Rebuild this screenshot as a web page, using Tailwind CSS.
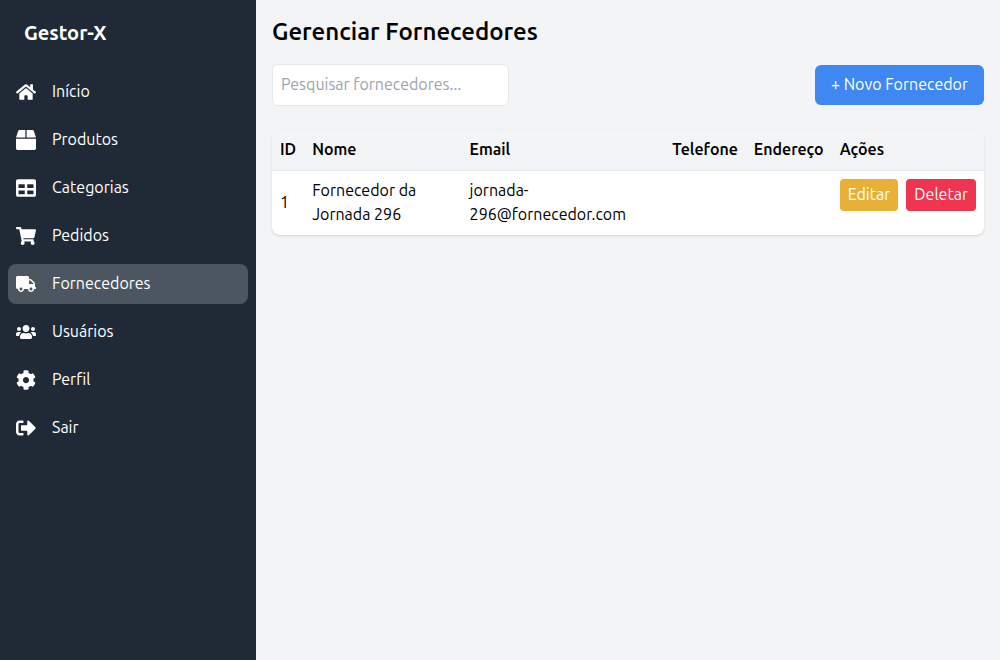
<!DOCTYPE html>
<html lang="pt-BR">
<head>
<meta charset="utf-8">
<meta name="viewport" content="width=device-width, initial-scale=1">
<title>Gestor-X</title>
<script src="https://cdn.jsdelivr.net/npm/@tailwindcss/browser@4"></script>
</head>
<body class="flex min-h-screen bg-[#f3f4f6] font-['Ubuntu_Sans','Ubuntu','Noto_Sans',sans-serif] text-black">
<aside class="w-64 shrink-0 bg-[#202a36] text-white">
  <div class="flex h-16 items-center px-6 pt-0.5 text-xl font-bold">Gestor-X</div>
  <nav class="mt-2 flex flex-col gap-2 px-2">
    <a href="#inicio" class="flex items-center gap-4 rounded-lg p-2"><svg class="size-5" fill="currentColor" viewBox="0 0 576 512" aria-hidden="true"><path d="M280.37 148.26L96 300.11V464a16 16 0 0 0 16 16l112.06-.29a16 16 0 0 0 15.92-16V368a16 16 0 0 1 16-16h64a16 16 0 0 1 16 16v95.64a16 16 0 0 0 16 16.05L464 480a16 16 0 0 0 16-16V300L295.67 148.26a12.19 12.19 0 0 0-15.3 0zM571.6 251.47L488 182.56V44.05a12 12 0 0 0-12-12h-56a12 12 0 0 0-12 12v72.61L318.47 43a48 48 0 0 0-61 0L4.34 251.47a12 12 0 0 0-1.6 16.9l25.5 31A12 12 0 0 0 45.15 301l235.22-193.74a12.19 12.19 0 0 1 15.3 0L530.9 301a12 12 0 0 0 16.9-1.6l25.5-31a12 12 0 0 0-1.7-16.93z"/></svg><span>Início</span></a>
    <a href="#produtos" class="flex items-center gap-4 rounded-lg p-2"><svg class="size-5" fill="currentColor" viewBox="0 0 512 512" aria-hidden="true"><path d="M509.5 184.6L458.9 32.8C452.4 13.2 434.1 0 413.4 0H272v192h238.7c-.4-2.5-.4-5-1.2-7.4zM240 0H98.6c-20.7 0-39 13.2-45.5 32.8L2.5 184.6c-.8 2.4-.8 4.9-1.2 7.4H240V0zM0 224v240c0 26.5 21.5 48 48 48h416c26.5 0 48-21.5 48-48V224H0z"/></svg><span>Produtos</span></a>
    <a href="#categorias" class="flex items-center gap-4 rounded-lg p-2"><svg class="size-5" fill="currentColor" viewBox="0 0 512 512" aria-hidden="true"><path d="M464 32H48C21.49 32 0 53.49 0 80v352c0 26.51 21.49 48 48 48h416c26.51 0 48-21.49 48-48V80c0-26.51-21.49-48-48-48zM224 416H64v-96h160v96zm0-160H64v-96h160v96zm224 160H288v-96h160v96zm0-160H288v-96h160v96z"/></svg><span>Categorias</span></a>
    <a href="#pedidos" class="flex items-center gap-4 rounded-lg p-2"><svg class="size-5" fill="currentColor" viewBox="0 0 576 512" aria-hidden="true"><path d="M528.12 301.319l47.273-208C578.806 78.301 567.391 64 551.99 64H159.208l-9.166-44.81C147.758 8.021 137.93 0 126.529 0H24C10.745 0 0 10.745 0 24v16c0 13.255 10.745 24 24 24h69.883l70.248 343.435C147.325 417.1 136 435.222 136 456c0 30.928 25.072 56 56 56s56-25.072 56-56c0-15.674-6.447-29.835-16.824-40h209.647C430.447 426.165 424 440.326 424 456c0 30.928 25.072 56 56 56s56-25.072 56-56c0-22.172-12.888-41.332-31.579-50.405l5.517-24.276c3.413-15.018-8.002-29.319-23.403-29.319H218.117l-6.545-32h293.145c11.206 0 20.92-7.754 23.403-18.681z"/></svg><span>Pedidos</span></a>
    <a href="#fornecedores" aria-current="page" class="flex items-center gap-4 rounded-lg bg-[#4c5661] p-2"><svg class="size-5" fill="currentColor" viewBox="0 0 640 512" aria-hidden="true"><path d="M624 352h-16V243.9c0-12.7-5.1-24.9-14.1-33.9L494 110.1c-9-9-21.2-14.1-33.9-14.1H416V48c0-26.5-21.5-48-48-48H48C21.5 0 0 21.5 0 48v320c0 26.5 21.5 48 48 48h16c0 53 43 96 96 96s96-43 96-96h128c0 53 43 96 96 96s96-43 96-96h48c8.8 0 16-7.2 16-16v-32c0-8.8-7.2-16-16-16zM160 464c-26.5 0-48-21.5-48-48s21.5-48 48-48 48 21.5 48 48-21.5 48-48 48zm320 0c-26.5 0-48-21.5-48-48s21.5-48 48-48 48 21.5 48 48-21.5 48-48 48zm80-208H416V144h44.1l99.9 99.9V256z"/></svg><span>Fornecedores</span></a>
    <a href="#usuarios" class="flex items-center gap-4 rounded-lg p-2"><svg class="size-5" fill="currentColor" viewBox="0 0 640 512" aria-hidden="true"><path d="M96 224c35.3 0 64-28.7 64-64s-28.7-64-64-64-64 28.7-64 64 28.7 64 64 64zm448 0c35.3 0 64-28.7 64-64s-28.7-64-64-64-64 28.7-64 64 28.7 64 64 64zm32 32h-64c-17.6 0-33.5 7.1-45.1 18.6 40.3 22.1 68.9 62 75.1 109.4h66c17.7 0 32-14.3 32-32v-32c0-35.3-28.7-64-64-64zm-256 0c61.9 0 112-50.1 112-112S381.9 32 320 32 208 82.1 208 144s50.1 112 112 112zm76.8 32h-8.3c-20.8 10-43.9 16-68.5 16s-47.6-6-68.5-16h-8.3C179.6 288 128 339.6 128 403.2V432c0 26.5 21.5 48 48 48h288c26.5 0 48-21.5 48-48v-28.8c0-63.6-51.6-115.2-115.2-115.2zm-223.7-13.4C161.5 263.1 145.6 256 128 256H64c-35.3 0-64 28.7-64 64v32c0 17.7 14.3 32 32 32h65.9c6.3-47.4 34.9-87.3 75.2-109.4z"/></svg><span>Usuários</span></a>
    <a href="#perfil" class="flex items-center gap-4 rounded-lg p-2"><svg class="size-5" fill="currentColor" viewBox="0 0 512 512" aria-hidden="true"><path d="M487.4 315.7l-42.6-24.6c4.3-23.2 4.3-47 0-70.2l42.6-24.6c4.9-2.8 7.1-8.6 5.5-14-11.1-35.6-30-67.8-54.7-94.6-3.8-4.1-10-5.1-14.8-2.3L380.8 110c-17.9-15.4-38.5-27.3-60.8-35.1V25.8c0-5.6-3.9-10.5-9.4-11.7-36.7-8.2-74.3-7.8-109.2 0-5.5 1.2-9.4 6.1-9.4 11.7V75c-22.2 7.9-42.8 19.8-60.8 35.1L88.7 85.5c-4.9-2.8-11-1.9-14.8 2.3-24.7 26.7-43.6 58.9-54.7 94.6-1.7 5.4.6 11.2 5.5 14L67.3 221c-4.3 23.2-4.3 47 0 70.2l-42.6 24.6c-4.9 2.8-7.1 8.6-5.5 14 11.1 35.6 30 67.8 54.7 94.6 3.8 4.1 10 5.1 14.8 2.3l42.6-24.6c17.9 15.4 38.5 27.3 60.8 35.1v49.2c0 5.6 3.9 10.5 9.4 11.7 36.7 8.2 74.3 7.8 109.2 0 5.5-1.2 9.4-6.1 9.4-11.7v-49.2c22.2-7.9 42.8-19.8 60.8-35.1l42.6 24.6c4.9 2.8 11 1.9 14.8-2.3 24.7-26.7 43.6-58.9 54.7-94.6 1.5-5.5-.7-11.3-5.6-14.1zM256 336c-44.1 0-80-35.9-80-80s35.9-80 80-80 80 35.9 80 80-35.9 80-80 80z"/></svg><span>Perfil</span></a>
    <a href="#sair" class="flex items-center gap-4 rounded-lg p-2"><svg class="size-5" fill="currentColor" viewBox="0 0 512 512" aria-hidden="true"><path d="M497 273L329 441c-15 15-41 4.5-41-17v-96H152c-13.3 0-24-10.7-24-24v-96c0-13.3 10.7-24 24-24h136V88c0-21.4 25.9-32 41-17l168 168c9.3 9.4 9.3 24.6 0 34zM192 436v-40c0-6.6-5.4-12-12-12H96c-17.7 0-32-14.3-32-32V160c0-17.7 14.3-32 32-32h84c6.6 0 12-5.4 12-12V76c0-6.6-5.4-12-12-12H96c-53 0-96 43-96 96v192c0 53 43 96 96 96h84c6.6 0 12-5.4 12-12z"/></svg><span>Sair</span></a>
  </nav>
</aside>
<main class="min-w-0 flex-1 p-4">
  <h1 class="mb-4 text-2xl font-semibold">Gerenciar Fornecedores</h1>
  <div class="mb-6 flex items-center justify-between gap-4">
    <input type="text" aria-label="Pesquisar fornecedores" placeholder="Pesquisar fornecedores..." class="w-1/3 rounded-md border border-[#e5e7eb] bg-white p-2 placeholder:text-[#9ca3af]">
    <button type="button" class="rounded-md bg-[#3f87f1] px-4 py-2 text-white">+ Novo Fornecedor</button>
  </div>
  <div class="overflow-hidden rounded-lg bg-white shadow-sm">
    <table class="w-full border-collapse text-left">
      <thead class="bg-[#f3f4f6]">
        <tr class="border-b border-[#e5e7eb]">
          <th class="p-2 font-semibold">ID</th><th class="p-2 font-semibold">Nome</th><th class="p-2 font-semibold">Email</th><th class="p-2 font-semibold">Telefone</th><th class="p-2 font-semibold">Endereço</th><th class="p-2 font-semibold">Ações</th>
        </tr>
      </thead>
      <tbody>
        <tr>
          <td class="p-2">1</td>
          <td class="p-2">Fornecedor da Jornada 296</td>
          <td class="p-2">jornada-296@fornecedor.com</td>
          <td class="p-2"></td>
          <td class="p-2"></td>
          <td class="flex gap-2 p-2">
            <button type="button" class="rounded-sm bg-[#e8b037] px-2 py-1 text-white">Editar</button>
            <button type="button" class="rounded-sm bg-[#ef344f] px-2 py-1 text-white">Deletar</button>
          </td>
        </tr>
      </tbody>
    </table>
  </div>
</main>
</body>
</html>
